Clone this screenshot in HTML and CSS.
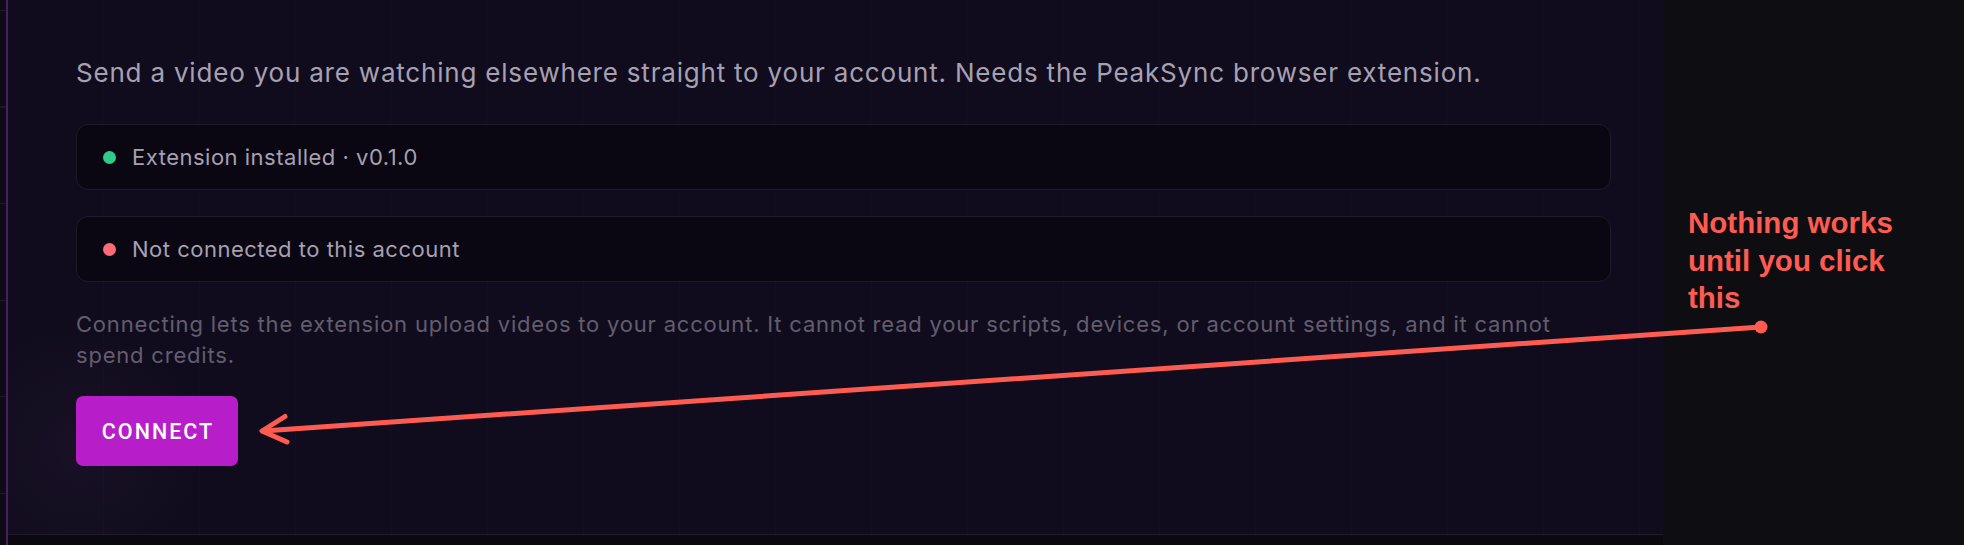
FILE: index.html
```html
<!DOCTYPE html>
<html lang="en">
<head>
<meta charset="utf-8">
<title>PeakSync extension</title>
<link rel="stylesheet" href="styles.css">
</head>
<body>
<div class="page">
  <div class="rail"></div>
  <main class="panel">
    <p class="lead">Send a video you are watching elsewhere straight to your account. Needs the PeakSync browser extension.</p>
    <div class="status">
      <span class="dot dot-ok"></span>
      <span class="status-text">Extension installed · v0.1.0</span>
    </div>
    <div class="status">
      <span class="dot dot-bad"></span>
      <span class="status-text">Not connected to this account</span>
    </div>
    <p class="note">Connecting lets the extension upload videos to your account. It cannot read your scripts, devices, or account settings, and it cannot spend credits.</p>
    <button class="btn" type="button">CONNECT</button>
  </main>
  <aside class="annot">
    <p class="annot-text">Nothing works<br>until you click<br>this</p>
  </aside>
  <svg class="arrow" width="1964" height="545" viewBox="0 0 1964 545" aria-hidden="true">
    <line x1="1761" y1="327" x2="263" y2="431" stroke="#ff5b50" stroke-width="5" stroke-linecap="round"/>
    <polyline points="285,416.5 262,431 287,442" fill="none" stroke="#ff5b50" stroke-width="5" stroke-linecap="round" stroke-linejoin="round"/>
    <circle cx="1761" cy="327" r="6.5" fill="#ff5b50"/>
  </svg>
</div>
</body>
</html>
```

FILE: styles.css
```css
* { box-sizing: border-box; }

html, body {
  margin: 0;
  padding: 0;
  background: #0e0d12;
  width: 1964px;
  height: 545px;
  overflow: hidden;
}

.page {
  position: relative;
  display: flex;
  width: 1964px;
  height: 545px;
}

.rail {
  width: 8px;
  height: 545px;
  background-color: #0e0a16;
  background-image: repeating-linear-gradient(180deg, transparent 0, transparent 10px, #1c1626 10px, #1c1626 11px, transparent 11px, transparent 96.5px);
  border-right: 2px solid #4a1c60;
}

.panel {
  width: 1655px;
  height: 545px;
  padding: 0 52px 0 68px;
  background-color: #110c1d;
  background-image:
    radial-gradient(circle at 70px 450px, rgba(60, 40, 80, 0.18) 0, rgba(60, 40, 80, 0) 120px),
    repeating-linear-gradient(90deg, transparent 0, transparent 95px, rgba(255,255,255,0.012) 95px, rgba(255,255,255,0.012) 96px);
  border-bottom: 10px solid #0b0810;
  box-shadow: inset 0 -11px 0 -10px #221d2b;
  font-family: Inter, "Noto Sans", sans-serif;
}

.lead {
  margin: 56px 0 0;
  font-size: 26px;
  line-height: 33px;
  color: #a6a1b2;
  letter-spacing: 0.8px;
  white-space: nowrap;
}

.status {
  display: flex;
  align-items: center;
  height: 66px;
  margin-top: 35px;
  padding: 0 26px;
  background: #0a0612;
  border: 1px solid #1f1a2a;
  border-radius: 12px;
}

.status + .status {
  margin-top: 26px;
}

.dot {
  width: 13px;
  height: 13px;
  border-radius: 50%;
  flex: none;
}

.dot-ok { background: #2ecb8d; }
.dot-bad { background: #ff6a77; }

.status-text {
  margin-left: 16px;
  font-size: 22px;
  color: #a6a1b1;
  letter-spacing: 0.5px;
}

.note {
  margin: 27px 0 0;
  font-size: 22px;
  line-height: 31px;
  color: #625d6e;
  letter-spacing: 0.8px;
}

.btn {
  display: block;
  margin-top: 25px;
  width: 162px;
  height: 70px;
  border: 0;
  border-radius: 7px;
  background: #b71ec9;
  color: #ffffff;
  font-family: Roboto, "Liberation Sans", sans-serif;
  font-weight: 500;
  font-size: 21.5px;
  letter-spacing: 2px;
  padding: 0 0 0 2px;
}

.annot {
  flex: 1;
  padding: 204px 0 0 25px;
}

.annot-text {
  margin: 0;
  font-family: "Liberation Sans", Arial, sans-serif;
  font-weight: 700;
  font-size: 29.5px;
  line-height: 37.5px;
  color: #ff5b50;
}

.arrow {
  position: absolute;
  left: 0;
  top: 0;
  pointer-events: none;
}
```
